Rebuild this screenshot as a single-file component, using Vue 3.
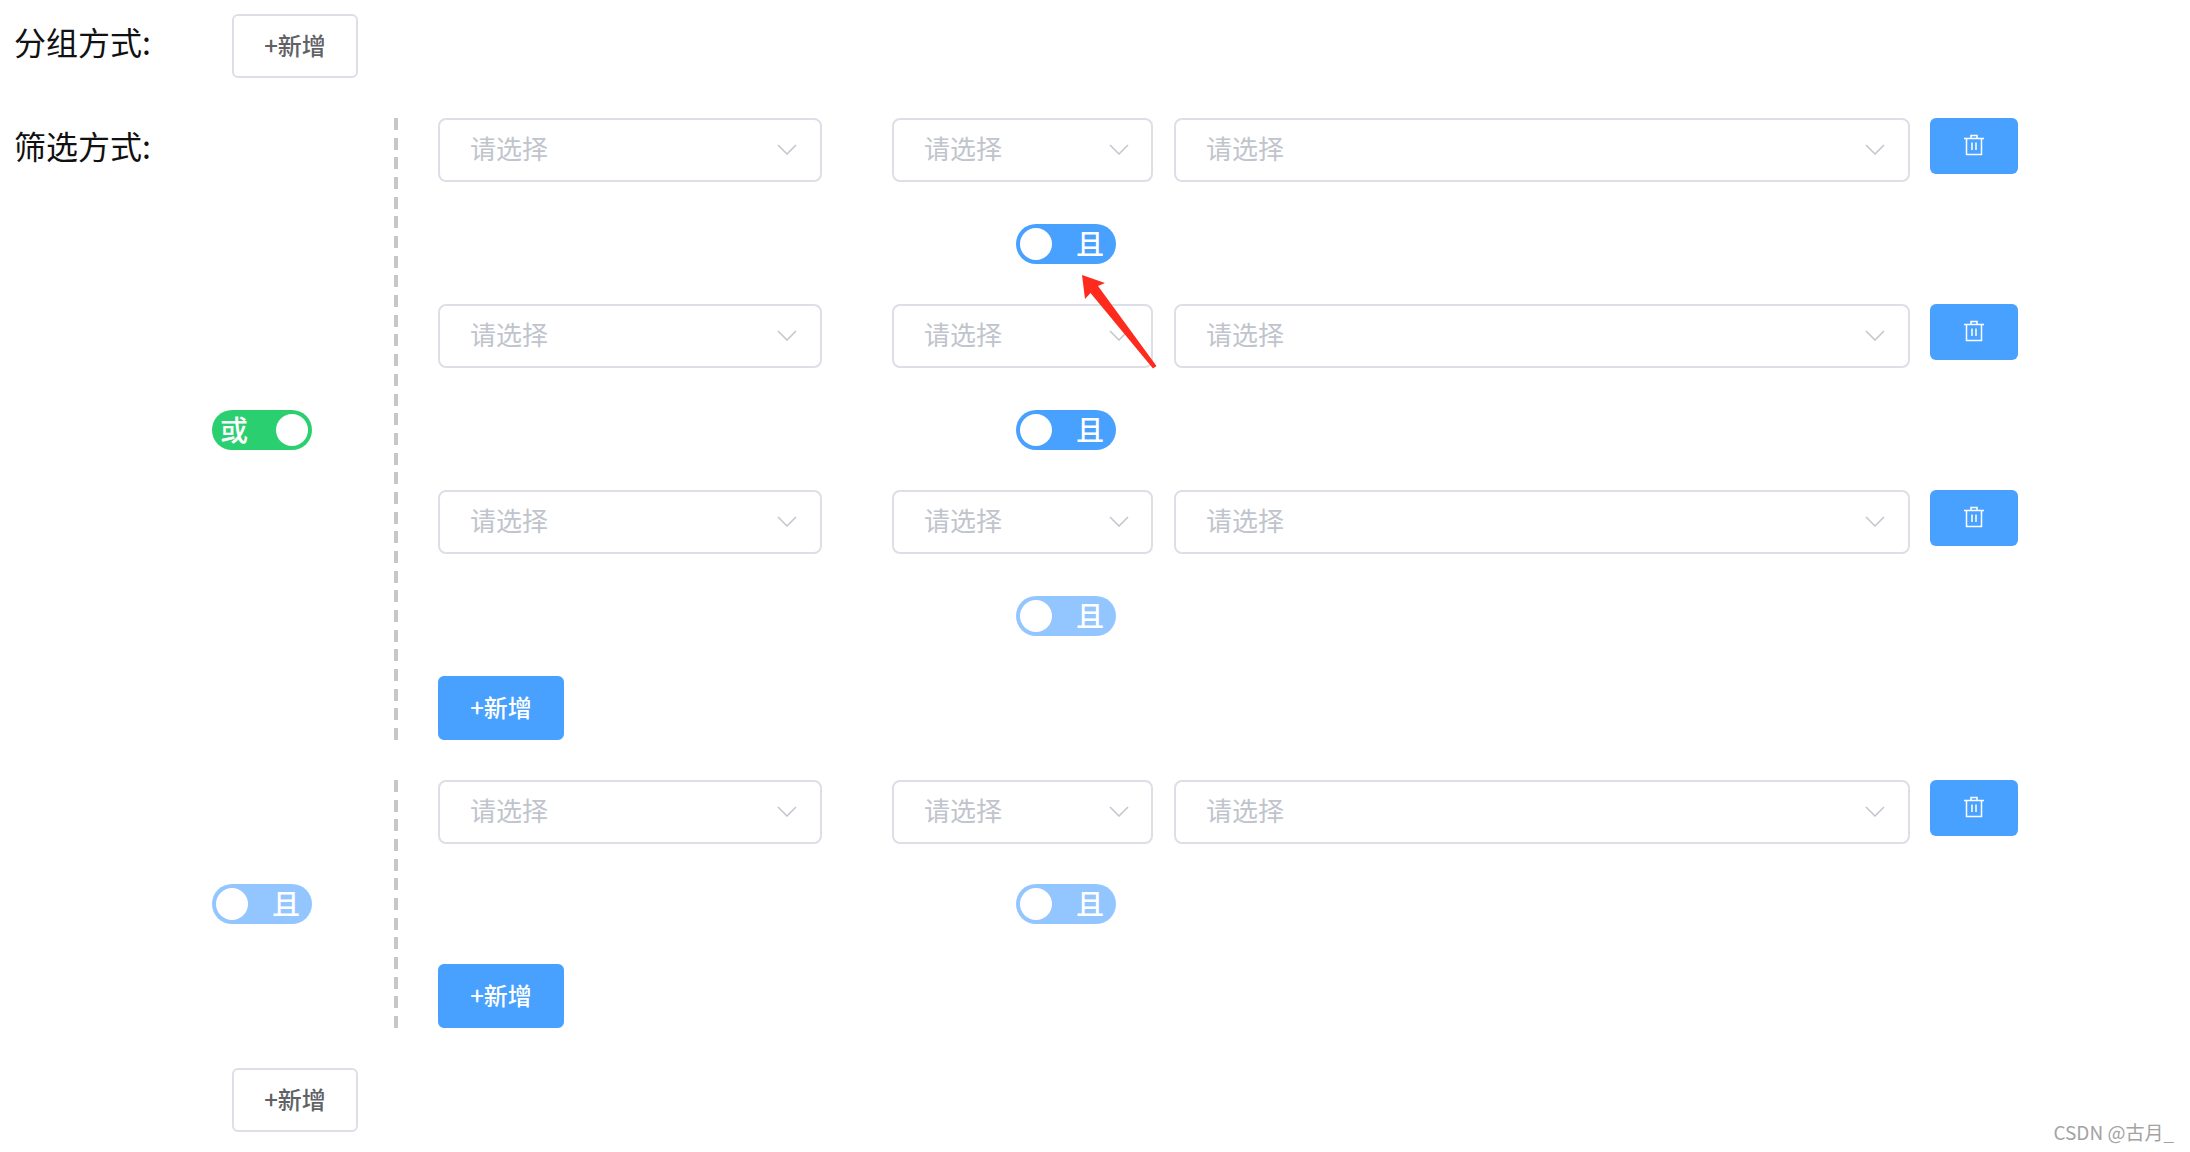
<template>
    <div class="page">
        <div class="group-row">
            <div class="label">分组方式:</div>
            <button class="btn-add plain"><span>+新增</span></button>
        </div>

        <div class="filter">
            <div class="label">筛选方式:</div>
            <div class="filter-body">
                <div v-for="(group, i) in groups" :key="i" class="group">
                    <div class="side" :class="{ tight: group.tight }">
                        <div class="switch" :class="group.type">
                            <template v-if="group.type === 'or'">
                                <span class="switch-text">或</span>
                                <span class="thumb"></span>
                            </template>
                            <template v-else>
                                <span class="thumb"></span>
                                <span class="switch-text">且</span>
                            </template>
                        </div>
                    </div>
                    <div class="dash"></div>
                    <div class="conditions">
                        <div v-for="(cond, j) in group.conditions" :key="j" class="condition">
                            <div class="line">
                                <div v-for="w in selectSizes" :key="w" class="select" :class="w">
                                    <span class="placeholder">请选择</span>
                                    <svg class="chevron" width="20" height="11" viewBox="0 0 20 11">
                                        <path d="M1 1 L10 10 L19 1" fill="none" stroke="#c4c7cf" stroke-width="1.6" />
                                    </svg>
                                </div>
                                <button class="btn-del">
                                    <svg width="22" height="22" viewBox="0 0 22 22">
                                        <path d="M1 4.5 H21 M8 4.5 V1.5 H14 V4.5 M3.5 4.5 V20.5 H18.5 V4.5 M9 8.5 V16 M13 8.5 V16"
                                            fill="none" stroke="#fff" stroke-width="1.5" />
                                    </svg>
                                </button>
                            </div>
                            <div class="link" :class="{ tight: group.tight }">
                                <div class="switch and" :class="{ light: cond.light }">
                                    <span class="thumb"></span>
                                    <span class="switch-text">且</span>
                                </div>
                            </div>
                        </div>
                        <button class="btn-add primary"><span>+新增</span></button>
                    </div>
                </div>
                <button class="btn-add plain bottom-add"><span>+新增</span></button>
            </div>
        </div>

        <svg class="arrow" width="90" height="110" viewBox="0 0 90 110">
            <path d="M2 1 L25 9 L18 12 L76.5 92 L73 94.5 L10.5 19 L5 25 Z" fill="#ff2a1e" />
        </svg>
        <div class="watermark">CSDN @古月_</div>
    </div>
</template>

<script setup>
const selectSizes = ['s-a', 's-b', 's-c'];

const groups = [
    {
        type: 'or',
        conditions: [{ light: false }, { light: false }, { light: true }],
    },
    {
        type: 'and light',
        tight: true,
        conditions: [{ light: true }],
    },
];
</script>

<style>
html,
body {
    background: #fff;
}
</style>

<style scoped>
.page {
    position: relative;
    width: 2190px;
    height: 1152px;
    overflow: hidden;
    padding: 14px 0 0 14px;
    box-sizing: border-box;
    font-family: "Noto Sans CJK SC", "Liberation Sans", sans-serif;
}

.group-row {
    display: flex;
    height: 64px;
    margin-bottom: 40px;
}

.label {
    width: 198px;
    flex-shrink: 0;
    font-size: 32px;
    line-height: 54px;
    color: #111;
}

.group-row .btn-add {
    margin-left: 20px;
}

.filter {
    display: flex;
}

.filter-body {
    display: flex;
    flex-direction: column;
    gap: 40px;
}

.group {
    display: flex;
    align-items: stretch;
}

.side {
    width: 100px;
    margin-right: 82px;
    padding-top: 1px;
    display: flex;
    align-items: center;
}

.side.tight {
    padding-top: 0;
}

.dash {
    width: 4px;
    margin-right: 40px;
    background: repeating-linear-gradient(to bottom, #c8c6c8 0, #c8c6c8 12px, transparent 12px, transparent 19.68px);
}

.conditions {
    display: flex;
    flex-direction: column;
    align-items: flex-start;
}

.line {
    display: flex;
    align-items: flex-start;
    height: 64px;
}

.select {
    height: 64px;
    box-sizing: border-box;
    border: 2px solid #dcdfe6;
    border-radius: 8px;
    padding: 0 23px 0 30px;
    display: flex;
    align-items: center;
    justify-content: space-between;
    background: #fff;
}

.s-a {
    width: 384px;
    margin-right: 70px;
}

.s-b {
    width: 261px;
    margin-right: 21px;
    padding-right: 22px;
}

.s-c {
    width: 736px;
    margin-right: 20px;
}

.placeholder {
    font-size: 26px;
    line-height: 32px;
    color: #c0c4cc;
    margin-top: -5px;
}

.chevron {
    margin-top: -1px;
}

.btn-del {
    width: 88px;
    height: 56px;
    padding: 0 0 3px;
    border: none;
    border-radius: 6px;
    background: #48a0ff;
    display: flex;
    align-items: center;
    justify-content: center;
}

.link {
    height: 122px;
    box-sizing: border-box;
    padding: 42px 0 0 578px;
}

.link.tight {
    height: 120px;
    padding-top: 40px;
}

.switch {
    width: 100px;
    height: 40px;
    box-sizing: border-box;
    border-radius: 20px;
    padding: 4px;
    display: flex;
    align-items: center;
    justify-content: space-between;
    color: #fff;
}

.switch.and {
    background: #48a0ff;
    padding-right: 12px;
}

.switch.and.light {
    background: #93c6ff;
}

.switch.or {
    background: #2ad06f;
    padding-left: 8px;
}

.switch-text {
    font-size: 28px;
    line-height: 32px;
    font-weight: 500;
    margin-top: -2px;
}

.thumb {
    width: 32px;
    height: 32px;
    border-radius: 50%;
    background: #fff;
}

.btn-add {
    width: 126px;
    height: 64px;
    box-sizing: border-box;
    border-radius: 6px;
    font-family: inherit;
    font-size: 24px;
    font-weight: 500;
    padding: 0 0 4px;
}

.btn-add.plain {
    background: #fff;
    border: 2px solid #dcdfe6;
    color: #606266;
}

.btn-add.primary {
    background: #48a0ff;
    border: 2px solid #48a0ff;
    color: #fff;
}

.bottom-add {
    align-self: flex-start;
    margin-left: 20px;
}

.arrow {
    position: absolute;
    left: 1080px;
    top: 274px;
}

.watermark {
    position: absolute;
    right: 16px;
    top: 1118px;
    font-size: 19px;
    line-height: 28px;
    color: #a3a3a3;
}
</style>
